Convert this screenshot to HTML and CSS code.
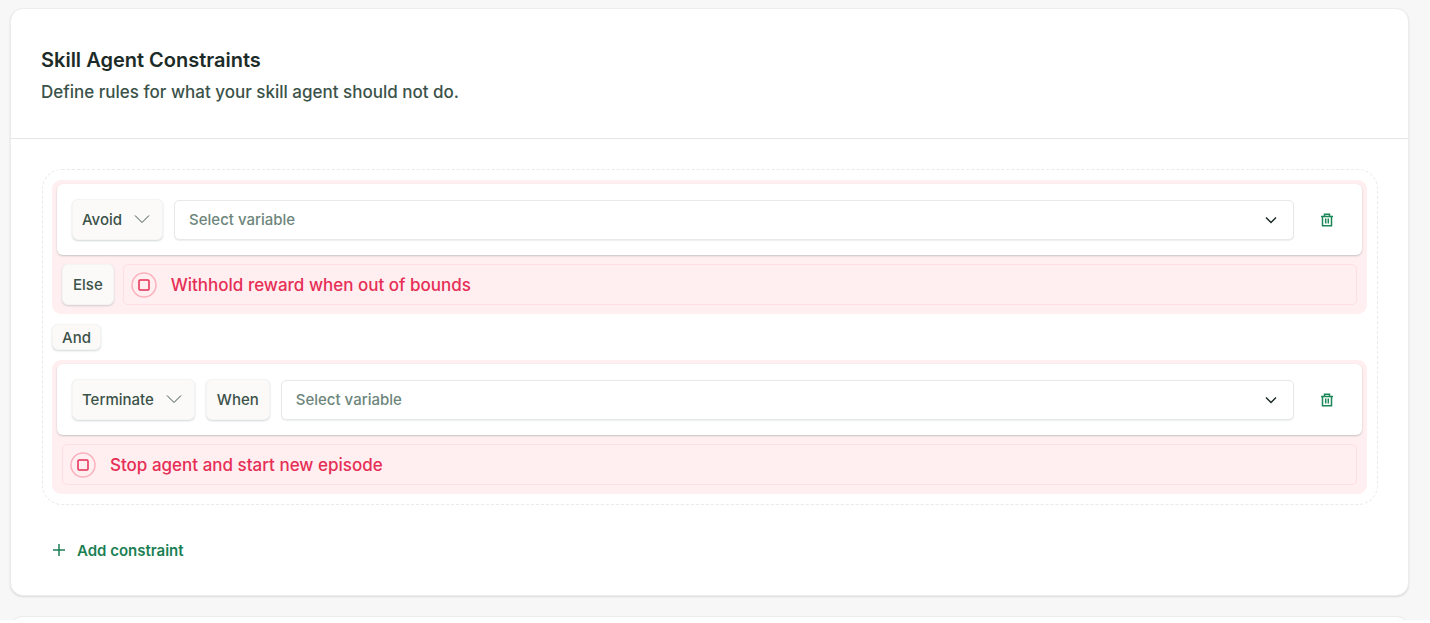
FILE: index.html
```html
<!DOCTYPE html>
<html lang="en">
<head>
  <meta charset="UTF-8">
  <meta name="viewport" content="width=device-width, initial-scale=1.0">
  <title>Skill Agent Constraints</title>
  <link rel="stylesheet" href="styles.css">
</head>
<body>
  <main class="page">
    <section class="card">
      <header class="card-header">
        <h1>Skill Agent Constraints</h1>
        <p>Define rules for what your skill agent should not do.</p>
      </header>

      <div class="card-body">
        <div class="group">
          <div class="rule">
            <div class="rule-row">
              <div class="picker">
                <select class="tag tag-select" aria-label="Constraint type">
                  <option selected>Avoid</option>
                  <option>Terminate</option>
                </select>
                <svg class="picker-arrow" width="16" height="16" viewBox="0 0 16 16"><path d="M1 4.500 8 11.500l7-7"/></svg>
              </div>
              <div class="picker picker-wide">
                <select class="variable" aria-label="Variable">
                  <option>Select variable</option>
                </select>
                <svg class="variable-arrow" width="12" height="12" viewBox="0 0 12 12"><path d="M1 3.500 6 8.500l5-5"/></svg>
              </div>
              <button class="delete" type="button" aria-label="Delete constraint">
                <svg width="14" height="14" viewBox="0 0 14 14"><path d="M1 3.500h12M4.500 3.300V1.200h5v2.100M2.500 3.500v9.200h9V3.500M5.700 5.500v5M8.300 5.500v5"/></svg>
              </button>
            </div>
            <div class="rule-result">
              <span class="tag">Else</span>
              <div class="message">
                <svg width="26" height="26" viewBox="0 0 26 26"><circle cx="13" cy="13" r="12"/><rect x="8" y="8" width="10" height="10" rx="1"/></svg>
                <span>Withhold reward when out of bounds</span>
              </div>
            </div>
          </div>

          <span class="tag tag-small">And</span>

          <div class="rule">
            <div class="rule-row">
              <div class="picker">
                <select class="tag tag-select" aria-label="Constraint type">
                  <option>Avoid</option>
                  <option selected>Terminate</option>
                </select>
                <svg class="picker-arrow" width="16" height="16" viewBox="0 0 16 16"><path d="M1 4.500 8 11.500l7-7"/></svg>
              </div>
              <span class="tag">When</span>
              <div class="picker picker-wide">
                <select class="variable" aria-label="Variable">
                  <option>Select variable</option>
                </select>
                <svg class="variable-arrow" width="12" height="12" viewBox="0 0 12 12"><path d="M1 3.500 6 8.500l5-5"/></svg>
              </div>
              <button class="delete" type="button" aria-label="Delete constraint">
                <svg width="14" height="14" viewBox="0 0 14 14"><path d="M1 3.500h12M4.500 3.300V1.200h5v2.100M2.500 3.500v9.200h9V3.500M5.700 5.500v5M8.300 5.500v5"/></svg>
              </button>
            </div>
            <div class="rule-result">
              <div class="message">
                <svg width="26" height="26" viewBox="0 0 26 26"><circle cx="13" cy="13" r="12"/><rect x="8" y="8" width="10" height="10" rx="1"/></svg>
                <span>Stop agent and start new episode</span>
              </div>
            </div>
          </div>
        </div>

        <button class="add" type="button">
          <svg width="14" height="14" viewBox="0 0 14 14"><path d="M7 1v12M1 7h12"/></svg>
          Add constraint
        </button>
      </div>
    </section>

    <section class="card card-next"></section>
  </main>
</body>
</html>
```

FILE: styles.css
```css
* {
  box-sizing: border-box;
}

body {
  margin: 0;
  background: #fff;
  color: #3b5249;
  font-family: Inter, "Liberation Sans", sans-serif;
  font-size: 15px;
  font-weight: 500;
}

svg {
  fill: none;
  stroke: currentColor;
  flex: none;
}

.page {
  background: #f7f7f7;
  padding: 8px 21px 0 10px;
  overflow: hidden;
}

.card {
  background: #fff;
  border: 1px solid #ebecec;
  border-radius: 13px;
  box-shadow: 0 1px 2px rgba(0, 0, 0, 0.12);
}

/* next section starts just under the fold */
.card-next {
  height: 40px;
  margin-top: 20px;
  margin-bottom: -36px;
}

.card-header {
  padding: 36px 30px 33px;
  border-bottom: 1px solid #e6e8e7;
}

.card-header h1 {
  margin: 0 0 4px;
  font-size: 20px;
  line-height: 30px;
  font-weight: 600;
  color: #1c2b28;
}

.card-header p {
  margin: 0;
  font-size: 17px;
  line-height: 26px;
}

.card-body {
  padding: 30px 30px 27px 31px;
}

.group {
  display: flex;
  flex-direction: column;
  gap: 10px;
  padding: 10px 10px 10px 9px;
  border: 1px dashed #e9eaea;
  border-radius: 20px;
}

.rule {
  padding: 4px 5px 9px;
  border-radius: 9px;
  background: #ffeff0;
}

.rule-row {
  display: flex;
  align-items: center;
  gap: 11px;
  padding: 15px 14px 15px 15px;
  background: #fff;
  border-radius: 6px;
  box-shadow: 0 1px 2px rgba(30, 60, 60, 0.25);
}

.rule-result {
  display: flex;
  gap: 9px;
  padding: 9px 5px 0;
}

.tag {
  display: flex;
  align-items: center;
  height: 41px;
  padding: 0 10px;
  border: 1px solid #f3f4f3;
  border-radius: 6px;
  background: #fbfaf9;
  box-shadow: 0 1px 2px rgba(30, 60, 60, 0.2);
  color: #3b5249;
  font: inherit;
}

.tag-small {
  align-self: flex-start;
  height: 26px;
  padding: 0 9px;
}

.tag-select {
  appearance: none;
  field-sizing: content;
  padding: 0 40px 0 9px;
}

.picker {
  position: relative;
}

.picker-wide {
  flex: 1;
}

.picker-arrow {
  position: absolute;
  right: 13px;
  top: 12px;
}

.picker-arrow,
.variable-arrow {
  pointer-events: none;
}

.variable {
  appearance: none;
  display: block;
  width: 100%;
  height: 40px;
  padding: 0 40px 0 14px;
  border: 1px solid #e6e9e8;
  border-radius: 5px;
  background: #fff;
  box-shadow: 0 1px 1px rgba(30, 60, 60, 0.08);
  color: #6d857b;
  font: inherit;
}

.variable-arrow {
  position: absolute;
  right: 17px;
  top: 14px;
  color: #1c2b28;
  stroke-width: 1.5;
}

.delete {
  display: flex;
  align-items: center;
  justify-content: center;
  width: 43px;
  height: 40px;
  padding: 0;
  border: 0;
  background: none;
  color: #1b8757;
  stroke-width: 1.5;
}

.message {
  flex: 1;
  display: flex;
  align-items: center;
  gap: 14px;
  height: 41px;
  padding: 0 7px;
  border: 1px solid #ffdde1;
  border-radius: 5px;
  color: #e62e56;
  font-size: 17px;
}

.message circle {
  stroke: #fcb0bd;
  stroke-width: 1.5;
}

.message rect {
  stroke-width: 1.5;
}

.add {
  display: flex;
  align-items: center;
  gap: 11px;
  height: 36px;
  margin: 27px 0 0 10px;
  padding: 0;
  border: 0;
  background: none;
  color: #1b7f54;
  font: inherit;
  font-weight: 600;
}

.add svg {
  stroke-width: 1.5;
}
```
